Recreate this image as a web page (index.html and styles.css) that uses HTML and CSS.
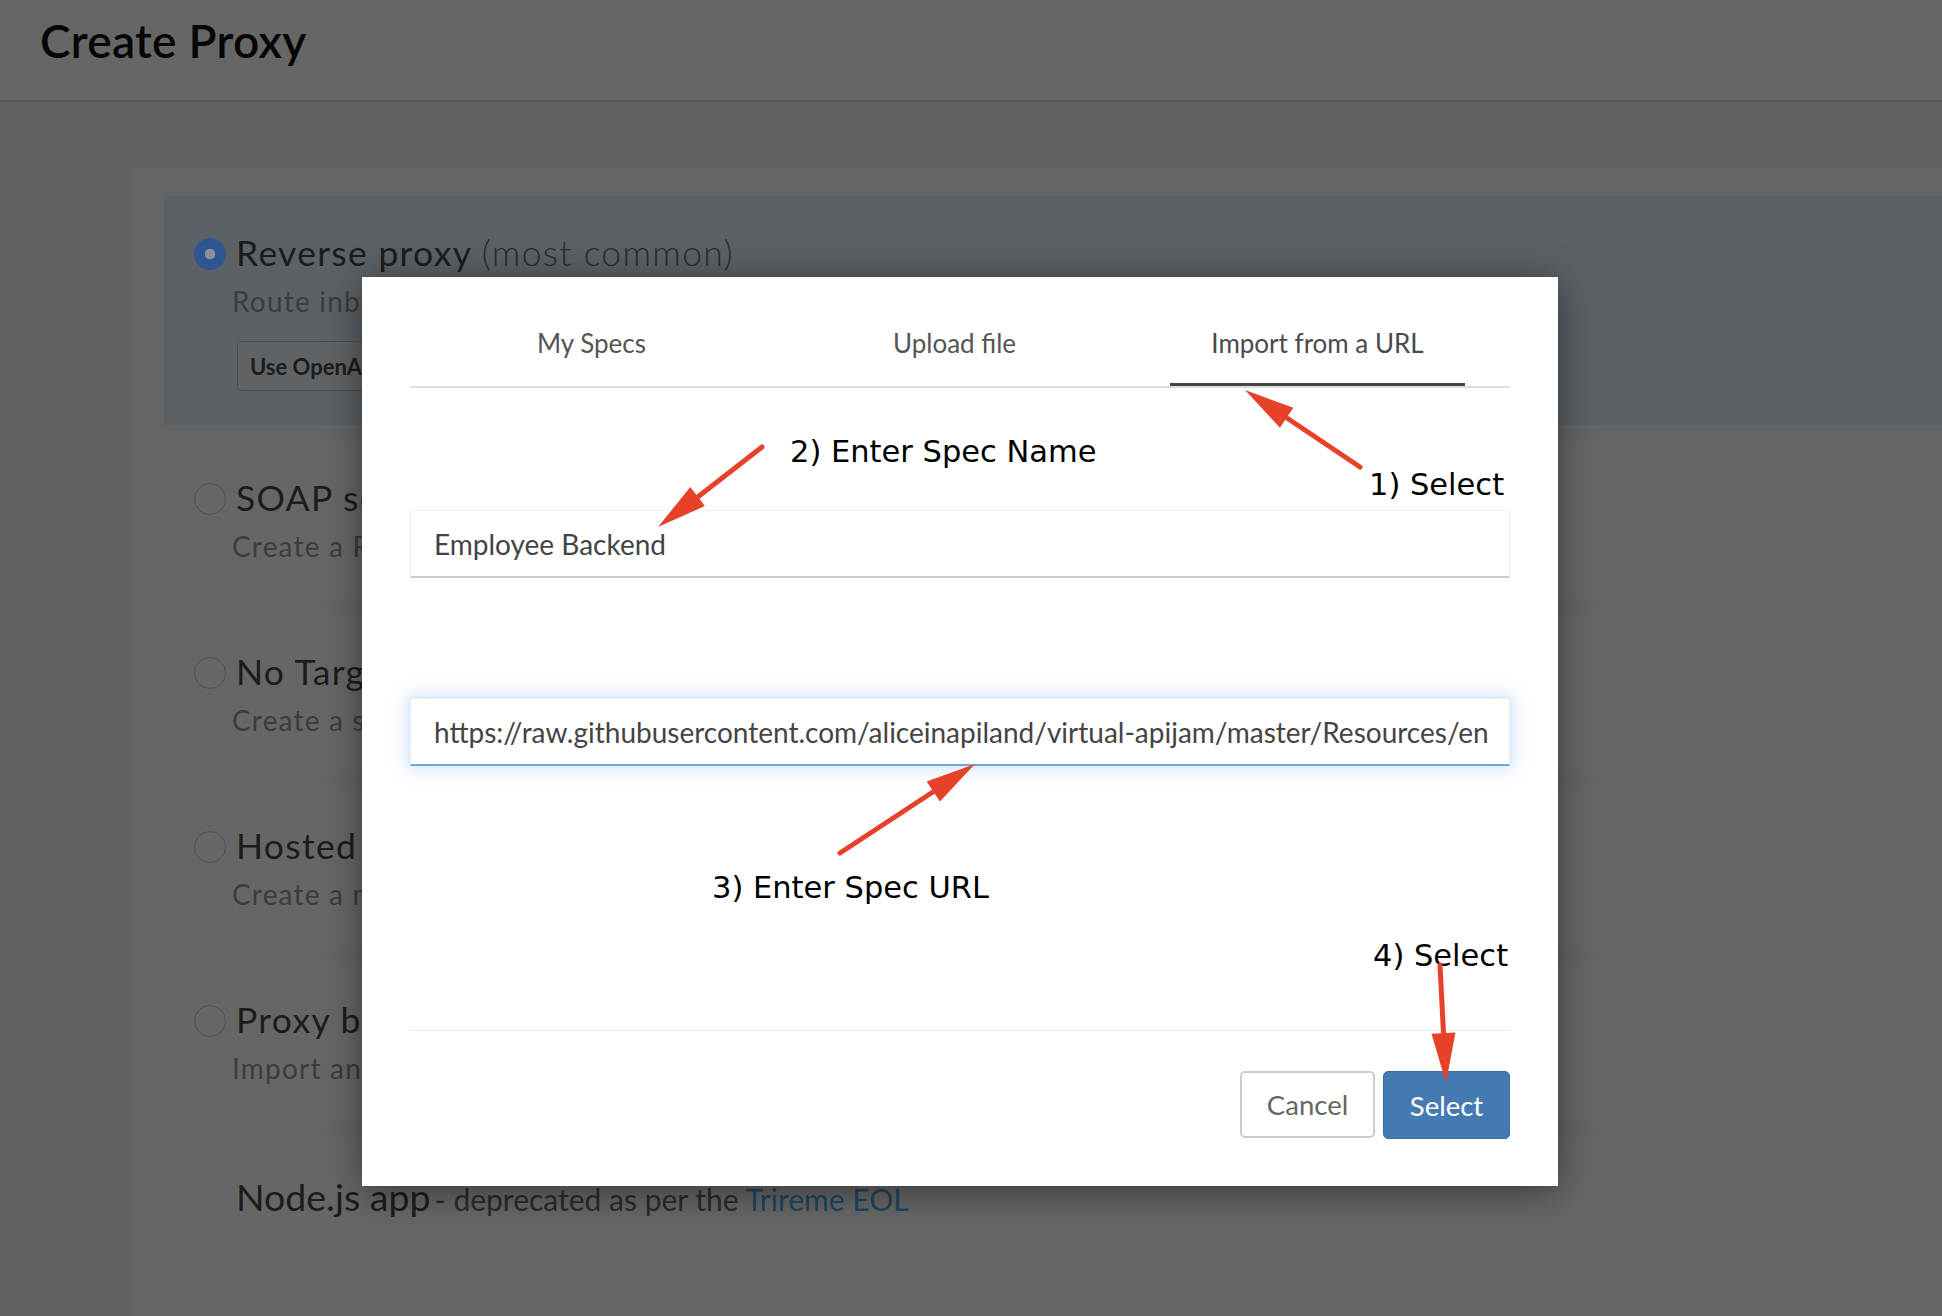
FILE: index.html
```html
<!DOCTYPE html>
<html lang="en">
<head>
<meta charset="utf-8">
<title>Create Proxy</title>
<link rel="stylesheet" href="styles.css">
</head>
<body>
<header class="page-header"><h1>Create Proxy</h1></header>
<main class="page-body">
  <div class="wrap">
    <section class="card card-selected">
      <div class="card-row"><span class="radio radio-on"></span><span class="card-title">Reverse proxy <span class="light">(most common)</span></span></div>
      <p class="card-desc">Route inbound requests to existing HTTP backend services.</p>
      <button class="btn-outline">Use OpenAPI Spec</button>
    </section>
    <section class="card">
      <div class="card-row"><span class="radio"></span><span class="card-title">SOAP service</span></div>
      <p class="card-desc">Create a RESTful or pass-through proxy for a SOAP-based service.</p>
    </section>
    <section class="card">
      <div class="card-row"><span class="radio"></span><span class="card-title">No Target</span></div>
      <p class="card-desc">Create a simple API proxy that does not route to any backend target.</p>
    </section>
    <section class="card">
      <div class="card-row"><span class="radio"></span><span class="card-title">Hosted Target</span></div>
      <p class="card-desc">Create a managed Node.js app deployed to a hosted environment.</p>
    </section>
    <section class="card">
      <div class="card-row"><span class="radio"></span><span class="card-title">Proxy bundle</span></div>
      <p class="card-desc">Import an existing proxy from a ZIP archive.</p>
    </section>
    <section class="card card-node">
      <div class="node-line"><span class="node-title">Node.js app</span> <span class="node-note">- deprecated as per the <a class="node-link">Trireme EOL</a></span></div>
    </section>
  </div>
</main>

<div class="modal">
  <nav class="tabs">
    <div class="tab">My Specs</div>
    <div class="tab">Upload file</div>
    <div class="tab active">Import from a URL</div>
  </nav>
  <div class="field field-name">Employee Backend</div>
  <div class="field field-url">https://raw.githubusercontent.com/aliceinapiland/virtual-apijam/master/Resources/en</div>
  <div class="modal-sep"></div>
  <div class="modal-footer">
    <button class="btn btn-cancel">Cancel</button>
    <button class="btn btn-primary">Select</button>
  </div>

  <div class="note note-2">2) Enter Spec Name</div>
  <div class="note note-1">1) Select</div>
  <div class="note note-3">3) Enter Spec URL</div>
  <div class="note note-4">4) Select</div>

  <svg class="arrows" width="1196" height="908" viewBox="0 0 1196 908" xmlns="http://www.w3.org/2000/svg">
    <g stroke="#e8412a" stroke-width="5" stroke-linecap="round" fill="none">
      <line x1="998" y1="190" x2="916" y2="135"/>
      <line x1="400" y1="170" x2="328" y2="226"/>
      <line x1="478" y1="576" x2="580" y2="509"/>
      <line x1="1078" y1="688" x2="1082" y2="766"/>
    </g>
    <g fill="#e8412a">
      <polygon points="883,113 931.3,130.8 917.9,150.8"/>
      <polygon points="296,250 328.3,210 342.9,229"/>
      <polygon points="613,487 577.9,524.5 564.7,504.5"/>
      <polygon points="1084,806 1069.5,756.7 1093.5,755.5"/>
    </g>
  </svg>
</div>
</body>
</html>
```
FILE: styles.css
```css
* { box-sizing: border-box; }
html, body { margin: 0; padding: 0; }
body {
  width: 1942px;
  height: 1316px;
  overflow: hidden;
  position: relative;
  background: #626262;
  font-family: Lato, "Open Sans", sans-serif;
}

/* ---------- page (dimmed behind the modal) ---------- */
.page-header {
  height: 102px;
  background: #666666;
  border-bottom: 2px solid #565656;
  padding: 16px 0 0 40px;
}
.page-header h1 {
  margin: 0;
  font-size: 46px;
  line-height: 50px;
  font-weight: 600;
  letter-spacing: 0.3px;
  color: #060606;
}
.page-body {
  padding: 66px 0 0 133px;
}
.wrap {
  background: #656565;
  padding: 28px 0 30px 31px;
}
.card {
  background: #666666;
  height: 158px;
  margin-bottom: 16px;
  padding: 37px 0 0 30px;
}
.card-selected {
  background: #5c6165;
  height: 229px;
}
.card-row {
  display: flex;
  align-items: flex-start;
  height: 40px;
}
.radio {
  width: 32px;
  height: 32px;
  border-radius: 50%;
  margin-top: 5px;
  border: 1.5px solid #4f4f4f;
  background: #676767;
  flex: none;
}
.radio-on {
  border: none;
  background: radial-gradient(circle, #8e9297 0 5px, #2c5591 5.6px);
}
.card-title {
  margin-left: 10px;
  font-size: 35.5px;
  line-height: 40px;
  letter-spacing: 1.3px;
  color: #1c1c1c;
  white-space: nowrap;
}
.light {
  font-weight: 300;
  color: #2c2c2c;
}
.card-desc {
  margin: 10px 0 0 38px;
  font-size: 28px;
  line-height: 36px;
  letter-spacing: 1.2px;
  color: #3c3c3c;
  white-space: nowrap;
}
.btn-outline {
  margin: 22px 0 0 43px;
  height: 50px;
  padding: 0 12px;
  border: 1.5px solid #4b4b4b;
  border-radius: 4px;
  background: #606366;
  font-family: Lato, sans-serif;
  font-weight: 700;
  font-size: 22px;
  color: #1c1c1c;
}
.card-node {
  height: 151px;
  padding: 40px 0 0 72px;
}
.node-line {
  line-height: 40px;
  white-space: nowrap;
}
.node-title {
  font-size: 37.5px;
  color: #1c1c1c;
}
.node-note {
  font-size: 30px;
  color: #2b2b2b;
}
.node-link {
  color: #1d4661;
}

/* ---------- modal ---------- */
.modal {
  position: absolute;
  left: 362px;
  top: 277px;
  width: 1196px;
  height: 909px;
  background: #ffffff;
  box-shadow: 0 5px 35px rgba(0, 0, 0, 0.45);
  padding: 30px 48px 0;
  display: flex;
  flex-direction: column;
}
.tabs {
  display: grid;
  grid-template-columns: repeat(3, 363px);
  border-bottom: 2px solid #dddddd;
}
.tab {
  margin: 0 34px;
  height: 79px;
  padding-bottom: 4px;
  display: flex;
  align-items: center;
  justify-content: center;
  font-size: 26px;
  color: #555555;
  border-bottom: 3px solid transparent;
}
.tab.active {
  border-bottom-color: #444444;
  color: #4a4a4a;
}
.field {
  height: 68px;
  border: 1px solid #f1f1f1;
  border-bottom: 2px solid #cccccc;
  padding: 2px 22px 0 23px;
  font-size: 28px;
  line-height: 63px;
  color: #444444;
  white-space: nowrap;
  overflow: hidden;
}
.field-name {
  margin-top: 122px;
}
.field-url {
  margin-top: 120px;
  border-color: #e4ecf8;
  border-bottom-color: #6ea6e0;
  box-shadow: 0 0 16px 3px rgba(120, 170, 230, 0.35);
}
.modal-sep {
  margin-top: 264px;
  height: 1px;
  background: #e9e9e9;
}
.modal-footer {
  margin-top: 40px;
  display: flex;
  justify-content: flex-end;
  align-items: flex-start;
  gap: 8px;
}
.btn {
  font-family: Lato, sans-serif;
  font-size: 27.5px;
  border-radius: 5px;
  padding: 0;
}
.btn-cancel {
  width: 135px;
  height: 67px;
  border: 2px solid #cccccc;
  background: #ffffff;
  color: #666666;
}
.btn-primary {
  width: 127px;
  height: 68px;
  border: 1px solid #3d6da5;
  background: #4579b2;
  color: #ffffff;
}

/* annotations */
.note {
  position: absolute;
  font-family: "DejaVu Sans", Verdana, sans-serif;
  font-size: 30.5px;
  line-height: 1;
  color: #000000;
  white-space: nowrap;
}
.note-2 { left: 428px; top: 160px; }
.note-1 { left: 1007px; top: 193px; }
.note-3 { left: 350px; top: 596px; }
.note-4 { left: 1011px; top: 664px; }
.arrows {
  position: absolute;
  left: 0;
  top: 0;
  pointer-events: none;
}
```
